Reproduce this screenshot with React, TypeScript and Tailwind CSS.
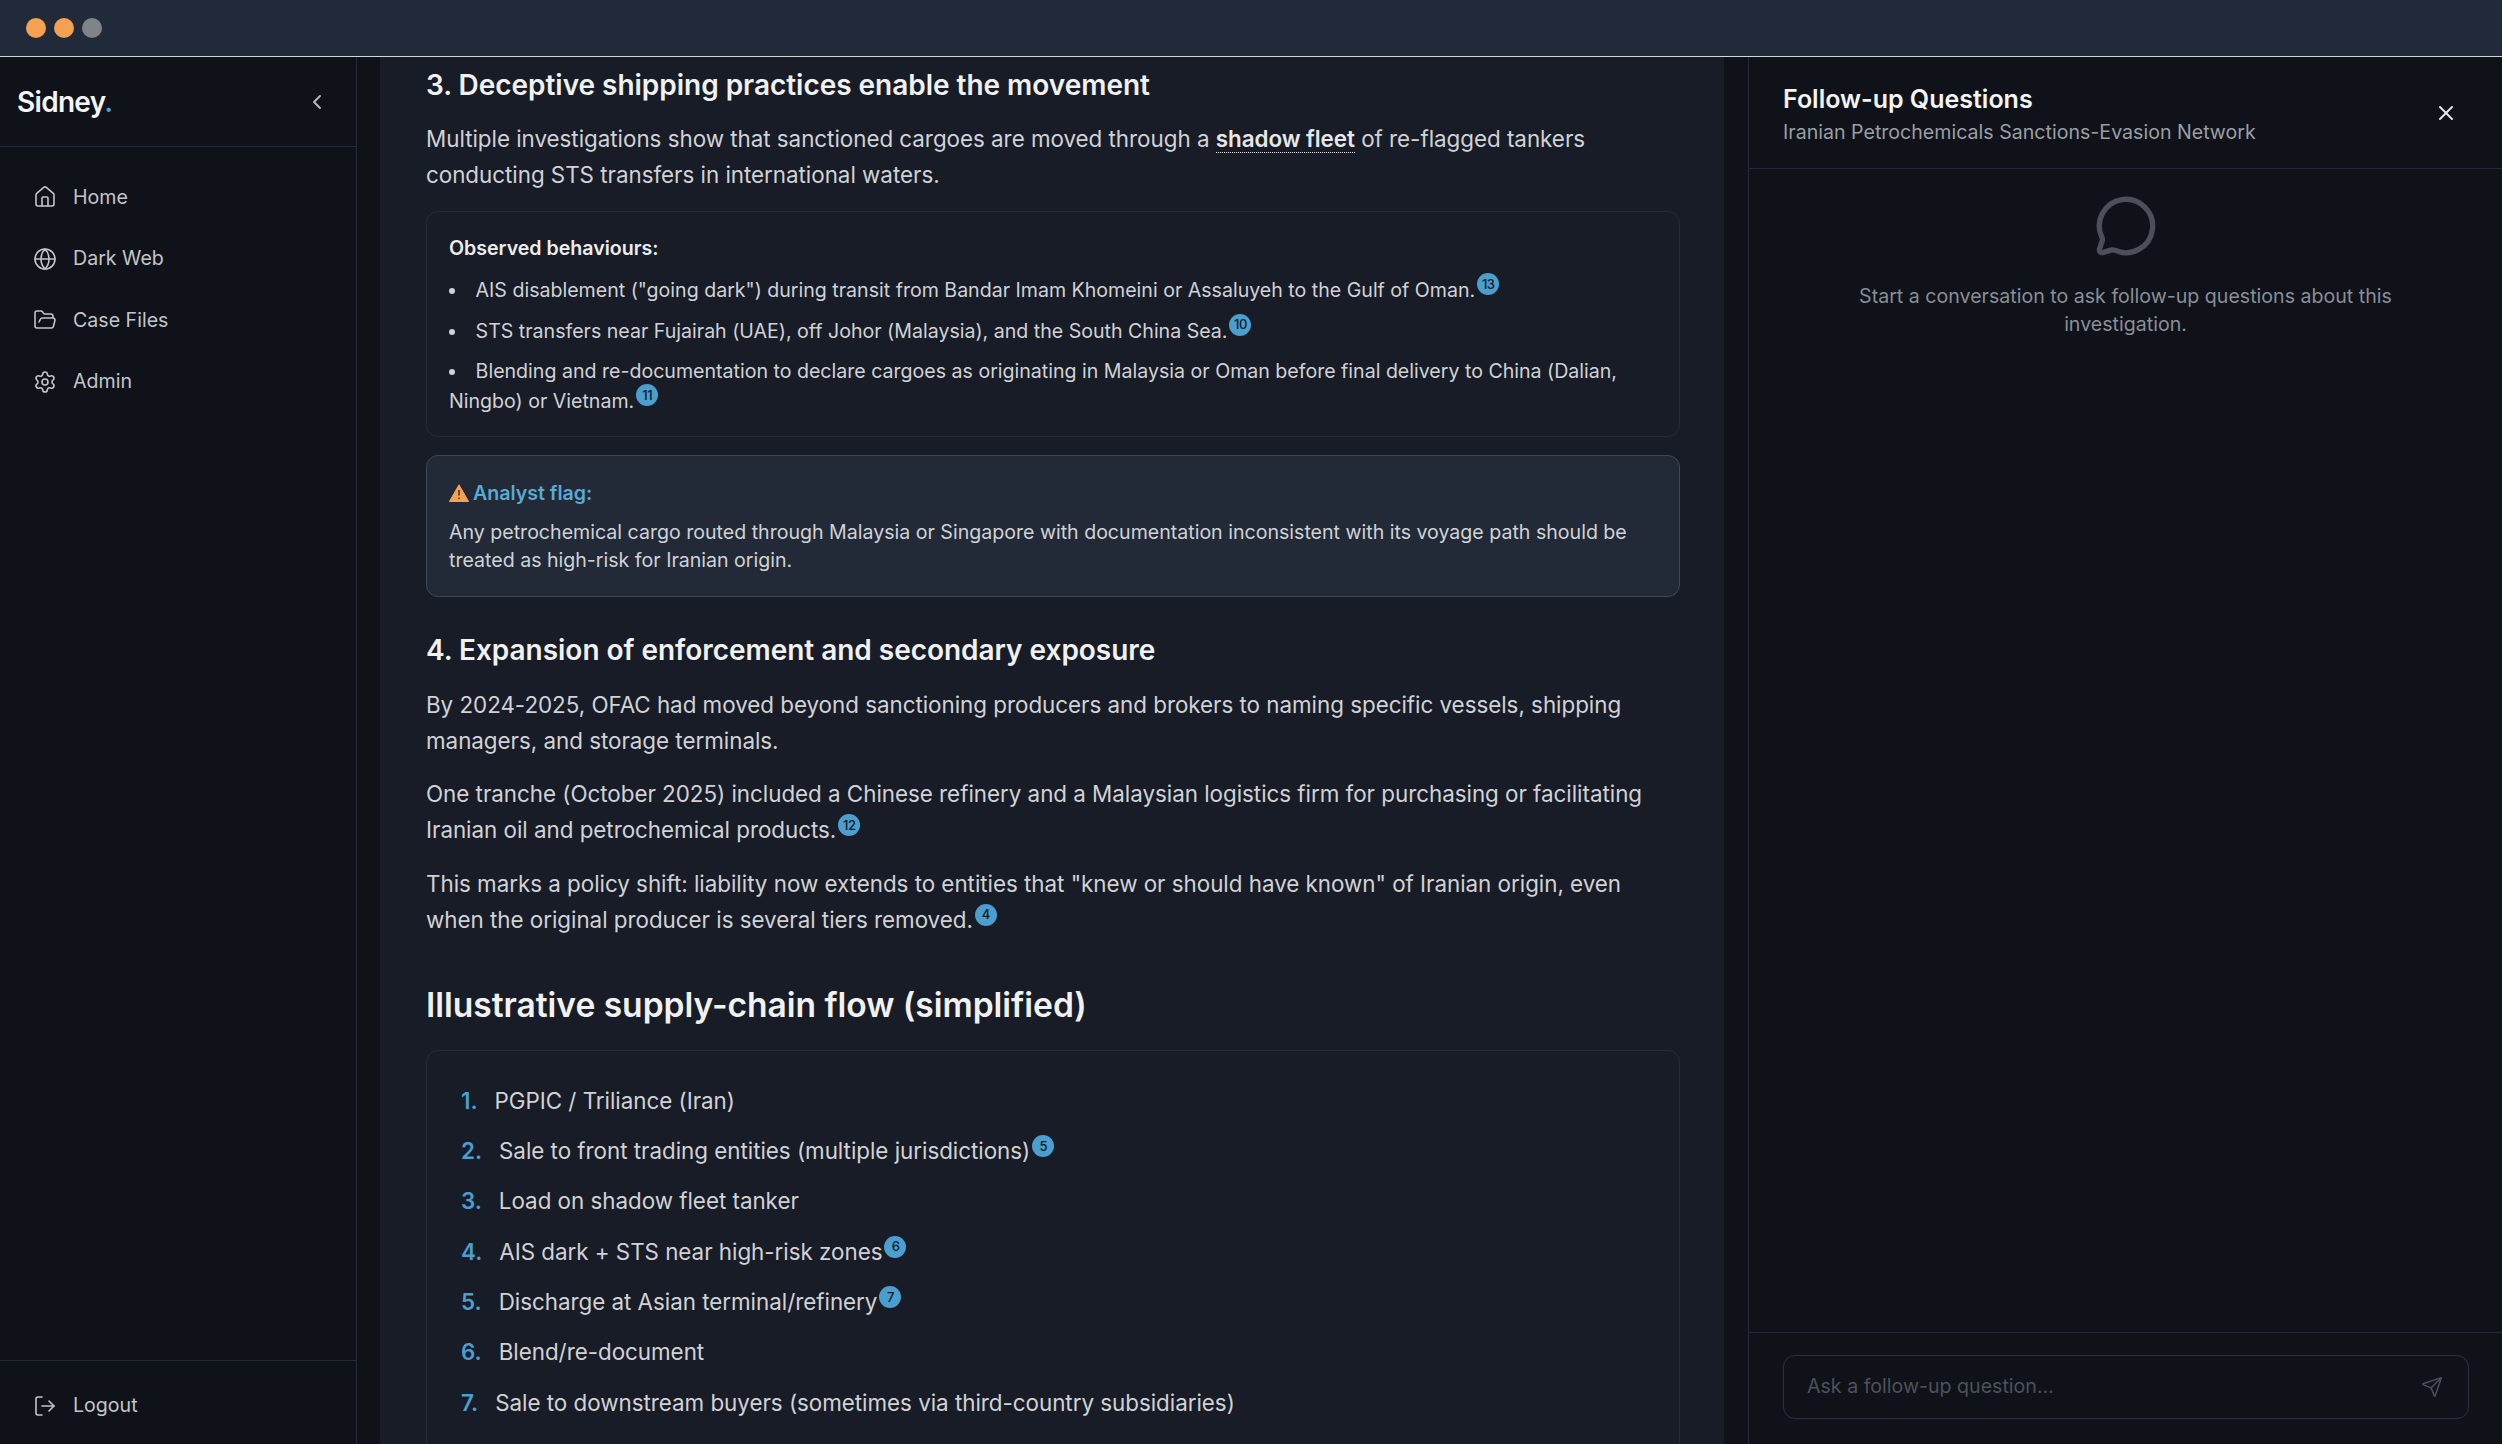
import { ChevronLeft, Home, Globe, FolderOpen, Settings, LogOut, X, MessageCircle, Send } from "lucide-react";

const font = { fontFamily: "Inter, 'Liberation Sans', sans-serif" };

function Cite({ n }: { n: number }) {
  return (
    <span className="inline-flex w-[22px] h-[22px] ml-[2px] my-[-8px] rounded-full bg-[#4a9fcf] text-[#131823] text-[13px] tracking-[-0.5px] font-medium items-center justify-center align-[8.5px] leading-none">
      {n}
    </span>
  );
}

function NavItem({ icon, label }: { icon: React.ReactNode; label: string }) {
  return (
    <div className="flex items-center gap-[16px] h-[61.5px] pl-[33px] text-[#c2c5ca] text-[19.6px]">
      {icon}
      <span>{label}</span>
    </div>
  );
}

const flow: [string, number?][] = [
  ["PGPIC / Triliance (Iran)"],
  ["Sale to front trading entities (multiple jurisdictions)", 5],
  ["Load on shadow fleet tanker"],
  ["AIS dark + STS near high-risk zones", 6],
  ["Discharge at Asian terminal/refinery", 7],
  ["Blend/re-document"],
  ["Sale to downstream buyers (sometimes via third-country subsidiaries)"],
];

export default function App() {
  return (
    <div className="h-screen w-full flex flex-col overflow-hidden bg-[#0f1219]" style={font}>
      <div className="h-[57px] shrink-0 bg-[#212a38] border-b border-[#d5d8da] flex items-center gap-2 pl-[26px]">
        <span className="w-5 h-5 rounded-full bg-[#f4a152]" />
        <span className="w-5 h-5 rounded-full bg-[#f4a152]" />
        <span className="w-5 h-5 rounded-full bg-[#808486]" />
      </div>
      <div className="flex-1 flex min-h-0">
        <aside className="w-[357px] shrink-0 border-r border-[#222a38] flex flex-col">
          <div className="h-[90px] shrink-0 border-b border-[#222a38] flex items-center justify-between pl-[17px] pr-[27px]">
            <span className="text-[28px] font-semibold text-[#f3f4f5] tracking-[-0.7px]">
              Sidney<span className="text-[#4a9fcf]">.</span>
            </span>
            <ChevronLeft className="w-6 h-6 text-[#b4b7bc]" strokeWidth={2} />
          </div>
          <nav className="flex-1 pt-[19.5px]">
            <NavItem icon={<Home className="w-6 h-6" strokeWidth={1.6} />} label="Home" />
            <NavItem icon={<Globe className="w-6 h-6" strokeWidth={1.6} />} label="Dark Web" />
            <NavItem icon={<FolderOpen className="w-6 h-6" strokeWidth={1.6} />} label="Case Files" />
            <NavItem icon={<Settings className="w-6 h-6" strokeWidth={1.6} />} label="Admin" />
          </nav>
          <div className="h-[84px] shrink-0 border-t border-[#222a38] flex items-center pt-[6px]">
            <NavItem icon={<LogOut className="w-6 h-6" strokeWidth={1.6} />} label="Logout" />
          </div>
        </aside>

        <main className="ml-[23px] w-[1344px] shrink-0 bg-[#181c27] overflow-hidden pl-[46px] pr-[44px] pt-[8px] text-[#d0d2d6] tracking-[-0.03px]">
          <h3 className="text-[28px] leading-[40px] font-semibold text-[#f0f1f2]">3. Deceptive shipping practices enable the movement</h3>
          <p className="mt-[16px] text-[22.4px] leading-[36px]">
            Multiple investigations show that sanctioned cargoes are moved through a{" "}
            <span className="font-semibold text-[#e6e7e9] border-b border-dotted border-[#e6e7e9]">shadow fleet</span> of re-flagged tankers conducting STS transfers in international waters.
          </p>
          <div className="mt-[18px] rounded-xl border border-[#252c39] px-[22px] pt-[22px] pb-[20px] text-[19.6px] leading-[28px] tracking-[-0.01px]">
            <div className="font-semibold text-[#eceded]">Observed behaviours:</div>
            <ul className="list-disc list-inside mt-[13px] flex flex-col gap-[10.5px] leading-[30px]">
              <li>AIS disablement ("going dark") during transit from Bandar Imam Khomeini or Assaluyeh to the Gulf of Oman.<Cite n={13} /></li>
              <li>STS transfers near Fujairah (UAE), off Johor (Malaysia), and the South China Sea.<Cite n={10} /></li>
              <li>Blending and re-documentation to declare cargoes as originating in Malaysia or Oman before final delivery to China (Dalian, Ningbo) or Vietnam.<Cite n={11} /></li>
            </ul>
          </div>
          <div className="mt-[18px] rounded-xl border border-[#3f4856] bg-[#212a36] px-[22px] pt-[23px] pb-[22px] text-[19.6px] leading-[28px] tracking-[-0.01px]">
            <div className="flex items-center gap-[4px] font-semibold text-[#5aa9d6]">
              <svg viewBox="0 0 20 18" className="w-[20px] h-[18px]">
                <path d="M10 0.8 L19.6 17.5 L0.4 17.5 Z" fill="#f4a152" stroke="#f4a152" strokeLinejoin="round" />
                <path d="M10 6 V11.5 M10 13.5 V15" stroke="#3a2a18" strokeWidth="1.4" />
              </svg>
              <span>Analyst flag:</span>
            </div>
            <p className="mt-[11px]">Any petrochemical cargo routed through Malaysia or Singapore with documentation inconsistent with its voyage path should be treated as high-risk for Iranian origin.</p>
          </div>
          <h3 className="mt-[33px] text-[28px] leading-[40px] font-semibold text-[#f0f1f2]">4. Expansion of enforcement and secondary exposure</h3>
          <p className="mt-[17px] text-[22.4px] leading-[36px]">By 2024-2025, OFAC had moved beyond sanctioning producers and brokers to naming specific vessels, shipping managers, and storage terminals.</p>
          <p className="mt-[17px] text-[22.4px] leading-[36px]">One tranche (October 2025) included a Chinese refinery and a Malaysian logistics firm for purchasing or facilitating Iranian oil and petrochemical products.<Cite n={12} /></p>
          <p className="mt-[17.5px] text-[22.4px] leading-[36px]">This marks a policy shift: liability now extends to entities that "knew or should have known" of Iranian origin, even when the original producer is several tiers removed.<Cite n={4} /></p>
          <h2 className="mt-[42px] text-[33.6px] leading-[50px] font-semibold text-[#f0f1f2]">Illustrative supply-chain flow (simplified)</h2>
          <div className="mt-[20px] rounded-xl border border-[#252c39] px-[34px] pt-[25px] pb-[26px] text-[22.4px]">
            <ol className="flex flex-col">
              {flow.map(([t, c], i) => (
                <li key={i} className="flex h-[50.3px] items-center gap-[17px]">
                  <span className="font-semibold text-[#4a9fcf]">{i + 1}.</span>
                  <span>{t}{c ? <Cite n={c} /> : null}</span>
                </li>
              ))}
            </ol>
          </div>
        </main>

        <div className="ml-[24px] flex-1 min-w-0 border-l border-[#222a38] flex flex-col">
          <div className="h-[112px] shrink-0 border-b border-[#222a38] flex items-center justify-between pl-[34px] pr-[44px]">
            <div className="pt-[3px]">
              <div className="text-[25px] leading-[34px] font-semibold text-[#f3f4f5]">Follow-up Questions</div>
              <div className="mt-[1px] text-[19.6px] leading-[30px] text-[#9a9ea5]">Iranian Petrochemicals Sanctions-Evasion Network</div>
            </div>
            <X className="w-6 h-6 text-[#e5e6e8]" />
          </div>
          <div className="flex-1 flex flex-col items-center pt-[25px] px-[34px]">
            <MessageCircle className="w-16 h-16 text-[#4a4f58]" strokeWidth={2} />
            <p className="mt-[25px] w-[600px] text-center text-[19.6px] leading-[27.5px] text-[#8a8e96]">Start a conversation to ask follow-up questions about this investigation.</p>
          </div>
          <div className="h-[112px] shrink-0 border-t border-[#222a38] pt-[22px] pl-[34px] pr-[33px]">
            <div className="h-[64px] rounded-xl border border-[#2a3240] flex items-center justify-between pl-[23px] pr-[25px]">
              <span className="text-[19.6px] text-[#4c515a]">Ask a follow-up question...</span>
              <Send className="w-[22px] h-[22px] text-[#4c515a]" strokeWidth={1.6} />
            </div>
          </div>
        </div>
      </div>
    </div>
  );
}
